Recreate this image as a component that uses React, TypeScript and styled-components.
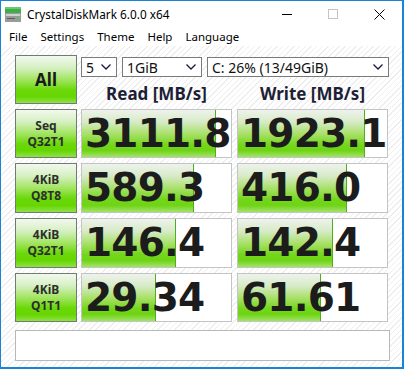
import { Fragment } from "react";
import styled, { createGlobalStyle } from "styled-components";

const GlobalStyle = createGlobalStyle`
  html, body {
    margin: 0;
    padding: 0;
    background: #ffffff;
  }
  * {
    box-sizing: border-box;
  }
`;

const Window = styled.div`
  width: 404px;
  height: 369px;
  display: flex;
  flex-direction: column;
  border: 1px solid #1883d7;
  border-right-width: 2px;
  border-bottom-width: 2px;
  background: #ffffff;
  font-family: "Noto Sans", "DejaVu Sans", sans-serif;
  color: #000000;
  overflow: hidden;
`;

const TitleBar = styled.div`
  height: 26px;
  display: flex;
  align-items: center;
  padding-left: 4px;
`;

const AppIcon = styled.svg`
  width: 16px;
  height: 15px;
  margin-right: 6px;
  margin-top: 1px;
`;

const Title = styled.span`
  font-size: 11.8px;
  flex: 1;
`;

const Caption = styled.div`
  width: 46px;
  height: 26px;
  display: flex;
  align-items: center;
  justify-content: center;
`;

const MenuBar = styled.div`
  height: 19px;
  display: flex;
  align-items: center;
  padding-left: 8px;
  gap: 13px;
`;

const MenuItem = styled.span`
  font-size: 11.5px;
  line-height: 19px;
`;

const Content = styled.div`
  flex: 1;
  padding: 9px 0 0 14px;
  background: repeating-linear-gradient(
    135deg,
    #ffffff 0px,
    #ffffff 3px,
    #eeeeee 3px,
    #eeeeee 4px
  );
`;

const Grid = styled.div`
  display: grid;
  grid-template-columns: 62px 152px 152px;
  grid-template-rows: 49px 49px 50px 50px 49px;
  column-gap: 4px;
  row-gap: 5px;
`;

const GreenButton = styled.div<{ $big?: boolean }>`
  border: 1px solid #6f7c6f;
  background: linear-gradient(
    to bottom,
    #f2f8ef 0%,
    #d6f0c2 25%,
    #9ee45a 52%,
    #6ad80a 72%,
    #66d600 86%,
    #8fe04a 100%
  );
  display: flex;
  flex-direction: column;
  align-items: center;
  justify-content: center;
  font-weight: 700;
  color: ${(p) => (p.$big ? "#1a1a1a" : "#2e2e2e")};
  font-size: ${(p) => (p.$big ? "17px" : "12px")};
  line-height: ${(p) => (p.$big ? "20px" : "16px")};
  text-align: center;
`;

const TopArea = styled.div`
  grid-column: 2 / span 2;
  display: flex;
  flex-direction: column;
  padding-top: 2px;
`;

const Selects = styled.div`
  display: flex;
  gap: 5px;
`;

const Select = styled.div<{ $w: number }>`
  width: ${(p) => p.$w}px;
  height: 20px;
  border: 1px solid #7a7a7a;
  background: #ffffff;
  display: flex;
  align-items: center;
  padding: 0 5px 0 4px;
  font-size: 14px;
  color: #111111;
`;

const SelectText = styled.span`
  flex: 1;
  white-space: nowrap;
`;

const Headers = styled.div`
  display: grid;
  grid-template-columns: 151px 151px;
  column-gap: 5px;
  margin-top: 6px;
`;

const Header = styled.div`
  text-align: center;
  font-weight: 700;
  font-size: 17px;
  line-height: 22px;
  color: #1e1e36;
`;

const Meter = styled.div`
  position: relative;
  width: 151px;
  height: 100%;
  border: 1px solid #c4c4c4;
  background: #ffffff;
  overflow: hidden;
`;

const Bar = styled.div`
  position: absolute;
  left: 0;
  top: 0;
  bottom: 0;
  border-right: 1px solid #4fae1c;
  background: linear-gradient(
    to bottom,
    #eef2ec 0%,
    #d7ebc8 25%,
    #a6e064 52%,
    #74d61c 74%,
    #6fd414 86%,
    #a2e36a 100%
  );
`;

const Value = styled.span`
  position: relative;
  display: block;
  padding-left: 3px;
  font-family: "DejaVu Sans", Verdana, sans-serif;
  font-weight: 700;
  font-size: 39px;
  letter-spacing: -0.8px;
  line-height: 47px;
  color: #1c1c1c;
  white-space: nowrap;
`;

const Comment = styled.div`
  margin-top: 8px;
  width: 375px;
  height: 31px;
  border: 1px solid #b8b8b8;
  background: #ffffff;
`;

const Chevron = () => (
  <svg width="10" height="6" viewBox="0 0 10 6">
    <polyline points="0.5,0.5 5,5 9.5,0.5" fill="none" stroke="#1a1a3a" strokeWidth="1.3" />
  </svg>
);

const rows = [
  { l1: "Seq", l2: "Q32T1", read: "3111.8", rw: 134, write: "1923.1", ww: 127 },
  { l1: "4KiB", l2: "Q8T8", read: "589.3", rw: 112, write: "416.0", ww: 109 },
  { l1: "4KiB", l2: "Q32T1", read: "146.4", rw: 94, write: "142.4", ww: 95 },
  { l1: "4KiB", l2: "Q1T1", read: "29.34", rw: 74, write: "61.61", ww: 83 },
];

const App = () => {
  return (
    <>
      <GlobalStyle />
      <Window>
        <TitleBar>
          <AppIcon viewBox="0 0 16 15">
            <rect x="0" y="0" width="16" height="6" fill="#3fae49" />
            <rect x="0" y="0" width="16" height="2" fill="#6cc874" />
            <rect x="0" y="6" width="16" height="9" fill="#9a9a9a" />
            <rect x="1" y="7" width="14" height="2" fill="#d0d0d0" />
            <rect x="2" y="11" width="8" height="1" fill="#5a5a5a" />
            <rect x="12" y="10" width="2" height="2" fill="#3fd24a" />
          </AppIcon>
          <Title>CrystalDiskMark 6.0.0 x64</Title>
          <Caption>
            <svg width="10" height="10" viewBox="0 0 10 10">
              <line x1="0" y1="5.5" x2="10" y2="5.5" stroke="#000" strokeWidth="1" />
            </svg>
          </Caption>
          <Caption>
            <svg width="10" height="10" viewBox="0 0 10 10">
              <rect x="0.5" y="0.5" width="9" height="9" fill="none" stroke="#c4c4c4" strokeWidth="1" />
            </svg>
          </Caption>
          <Caption>
            <svg width="11" height="11" viewBox="0 0 11 11">
              <line x1="0.5" y1="0.5" x2="10.5" y2="10.5" stroke="#000" strokeWidth="1" />
              <line x1="10.5" y1="0.5" x2="0.5" y2="10.5" stroke="#000" strokeWidth="1" />
            </svg>
          </Caption>
        </TitleBar>
        <MenuBar>
          <MenuItem>File</MenuItem>
          <MenuItem>Settings</MenuItem>
          <MenuItem>Theme</MenuItem>
          <MenuItem>Help</MenuItem>
          <MenuItem>Language</MenuItem>
        </MenuBar>
        <Content>
          <Grid>
            <GreenButton $big>All</GreenButton>
            <TopArea>
              <Selects>
                <Select $w={36}>
                  <SelectText>5</SelectText>
                  <Chevron />
                </Select>
                <Select $w={80}>
                  <SelectText>1GiB</SelectText>
                  <Chevron />
                </Select>
                <Select $w={182}>
                  <SelectText>C: 26% (13/49GiB)</SelectText>
                  <Chevron />
                </Select>
              </Selects>
              <Headers>
                <Header>Read [MB/s]</Header>
                <Header>Write [MB/s]</Header>
              </Headers>
            </TopArea>
            {rows.map((r, i) => (
              <Fragment key={i}>
                <GreenButton>
                  <span>{r.l1}</span>
                  <span>{r.l2}</span>
                </GreenButton>
                <Meter>
                  <Bar style={{ width: r.rw }} />
                  <Value>{r.read}</Value>
                </Meter>
                <Meter>
                  <Bar style={{ width: r.ww }} />
                  <Value>{r.write}</Value>
                </Meter>
              </Fragment>
            ))}
          </Grid>
          <Comment />
        </Content>
      </Window>
    </>
  );
};

export default App;
